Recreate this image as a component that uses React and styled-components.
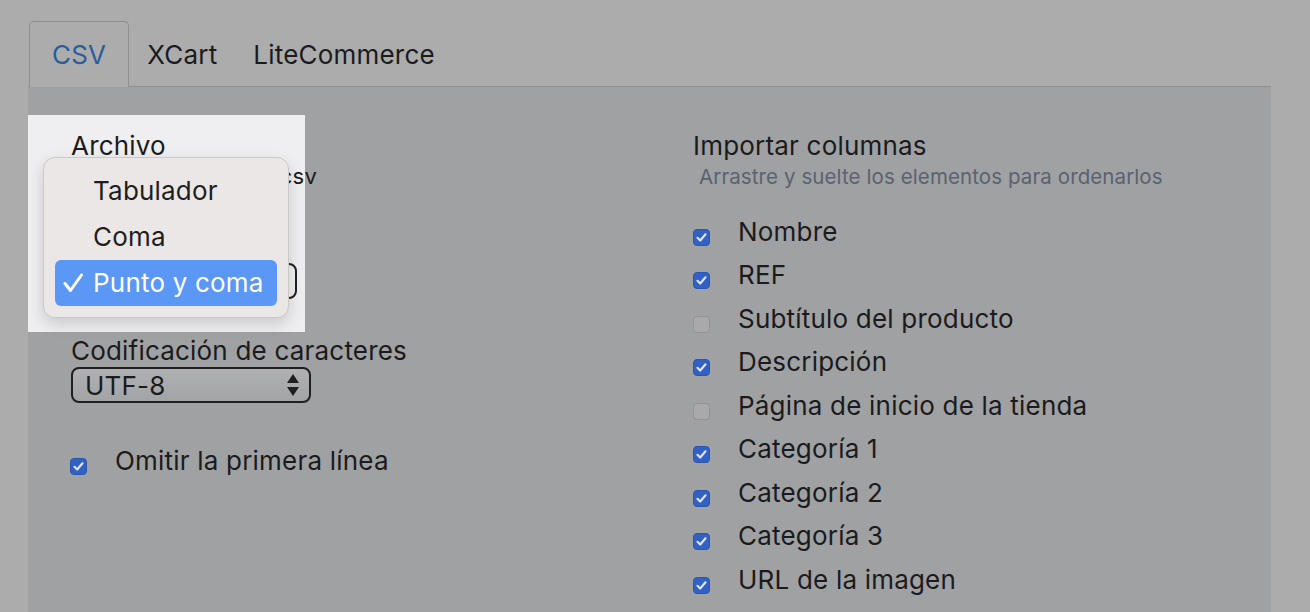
import React from 'react';
import styled, { createGlobalStyle } from 'styled-components';

const GlobalStyle = createGlobalStyle`
  html, body {
    margin: 0;
    padding: 0;
    overflow: hidden;
  }
  body {
    background: #acacac;
    font-family: Inter, "Noto Sans", sans-serif;
    color: #1b1b1d;
    letter-spacing: 0.2px;
  }
`;

const Page = styled.div`
  padding: 21px 39px 0 28px;
`;

const TabList = styled.div`
  display: flex;
  align-items: flex-start;
  height: 66px;
  box-sizing: border-box;
  border-bottom: 1px solid #8e8f91;
  padding-left: 1px;
`;

const Tab = styled.div`
  display: flex;
  align-items: center;
  box-sizing: border-box;
  height: ${p => (p.$active ? '66px' : '65px')};
  padding: 0 ${p => (p.$active ? '22px' : '17px')};
  font-size: 26px;
  color: ${p => (p.$active ? '#2b5c9e' : '#1b1b1d')};
  border: 1px solid ${p => (p.$active ? '#8e8f91' : 'transparent')};
  border-bottom: none;
  border-radius: 5px 5px 0 0;
  background: ${p => (p.$active ? '#acacac' : 'transparent')};
  position: relative;
  z-index: 1;
`;

const Panel = styled.div`
  position: relative;
  display: grid;
  grid-template-columns: 622px 1fr;
  padding: 44px 0 0 43px;
  min-height: 600px;
  background: #a0a1a3;
`;

const Spotlight = styled.div`
  position: absolute;
  left: 0;
  top: 28px;
  width: 277px;
  height: 217px;
  background: #efeff1;
`;

const Column = styled.div`
  position: relative;
  z-index: 1;
`;

const Field = styled.div`
  margin-top: ${p => p.$gap || 0}px;
`;

const Label = styled.div`
  font-size: 26px;
  line-height: 30px;
  white-space: nowrap;
`;

const FileName = styled.div`
  width: 246px;
  margin-top: 2px;
  font-size: 22px;
  line-height: 26px;
  text-align: right;
  white-space: nowrap;
`;

const Select = styled.div`
  display: flex;
  align-items: center;
  justify-content: space-between;
  box-sizing: border-box;
  width: ${p => p.$width}px;
  height: 36px;
  margin-top: 1px;
  padding: 0 10px 0 12px;
  border: 2px solid #1f1f21;
  border-radius: 8px;
  background: linear-gradient(rgba(255, 255, 255, 0.16), rgba(255, 255, 255, 0.03));
  font-size: 26px;
`;

const Subtitle = styled.div`
  margin: 4px 0 0 6px;
  font-size: 20.5px;
  line-height: 24px;
  letter-spacing: 0.1px;
  color: #5a6270;
  white-space: nowrap;
`;

const List = styled.div`
  margin-top: 27.5px;
`;

const CheckRow = styled.div`
  display: flex;
  align-items: flex-start;
  height: 43.5px;
  margin-top: ${p => p.$gap || 0}px;
  margin-left: ${p => p.$shift || 0}px;
  font-size: 26px;
  line-height: 30px;
  white-space: nowrap;
`;

const Box = styled.span`
  display: flex;
  align-items: center;
  justify-content: center;
  flex-shrink: 0;
  box-sizing: border-box;
  width: 17px;
  height: 17px;
  margin: 12px 28px 0 0;
  border-radius: 4px;
  background: ${p => (p.$checked ? '#3161c4' : '#a9a9ab')};
  border: 1px solid ${p => (p.$checked ? '#2b56b0' : '#939395')};
`;

const Menu = styled.div`
  position: absolute;
  left: 15px;
  top: 70px;
  z-index: 2;
  width: 246px;
  box-sizing: border-box;
  padding: 10px 11px 11px;
  background: #ece7e7;
  border: 1px solid #cdc8c8;
  border-radius: 12px;
  box-shadow: 0 6px 16px rgba(0, 0, 0, 0.16);
`;

const MenuItem = styled.div`
  display: flex;
  align-items: center;
  height: 46px;
  padding-left: 8px;
  border-radius: 6px;
  font-size: 26px;
  line-height: 30px;
  white-space: nowrap;
  background: ${p => (p.$selected ? '#5b97f5' : 'transparent')};
  color: ${p => (p.$selected ? '#ffffff' : '#1e1e1e')};
`;

const CheckSlot = styled.span`
  display: flex;
  align-items: center;
  width: 30px;
  flex-shrink: 0;
`;

const Tick = () => (
  <svg width="13" height="13" viewBox="0 0 13 13">
    <path d="M2.5 6.8 L5.2 9.5 L10.5 3.3" fill="none" stroke="#dfe4ee" strokeWidth="2.2" strokeLinecap="round" strokeLinejoin="round" />
  </svg>
);

const Checkbox = ({ checked }) => <Box $checked={checked}>{checked && <Tick />}</Box>;

const Arrows = () => (
  <svg width="12" height="23" viewBox="0 0 12 23">
    <path d="M0 9 L6 0 L12 9 Z" fill="#1f1f21" />
    <path d="M0 13 L12 13 L6 22 Z" fill="#1f1f21" />
  </svg>
);

const columns = [
  ['Nombre', true],
  ['REF', true],
  ['Subtítulo del producto', false],
  ['Descripción', true],
  ['Página de inicio de la tienda', false],
  ['Categoría 1', true],
  ['Categoría 2', true],
  ['Categoría 3', true],
  ['URL de la imagen', true],
];

const separators = ['Tabulador', 'Coma', 'Punto y coma'];

export default function App() {
  return (
    <>
      <GlobalStyle />
      <Page>
        <TabList>
          <Tab $active>CSV</Tab>
          <Tab>XCart</Tab>
          <Tab>LiteCommerce</Tab>
        </TabList>
        <Panel>
          <Spotlight />
          <Column>
            <Field>
              <Label>Archivo</Label>
              <FileName>productos.csv</FileName>
            </Field>
            <Field $gap={43}>
              <Label>Separador</Label>
              <Select $width={226}>
                <span>Punto y coma</span>
                <Arrows />
              </Select>
            </Field>
            <Field $gap={37}>
              <Label>Codificación de caracteres</Label>
              <Select $width={240}>
                <span>UTF-8</span>
                <Arrows />
              </Select>
            </Field>
            <CheckRow $gap={42.5} $shift={-1}>
              <Checkbox checked />
              <span>Omitir la primera línea</span>
            </CheckRow>
          </Column>
          <Column>
            <Label>Importar columnas</Label>
            <Subtitle>Arrastre y suelte los elementos para ordenarlos</Subtitle>
            <List>
              {columns.map(([name, checked]) => (
                <CheckRow key={name}>
                  <Checkbox checked={checked} />
                  <span>{name}</span>
                </CheckRow>
              ))}
            </List>
          </Column>
          <Menu>
            {separators.map(s => (
              <MenuItem key={s} $selected={s === 'Punto y coma'}>
                <CheckSlot>
                  {s === 'Punto y coma' && (
                    <svg width="20" height="20" viewBox="0 0 20 20">
                      <path d="M2 10.5 L7.5 17.5 L18.5 2" fill="none" stroke="#ffffff" strokeWidth="3" strokeLinecap="round" strokeLinejoin="round" />
                    </svg>
                  )}
                </CheckSlot>
                {s}
              </MenuItem>
            ))}
          </Menu>
        </Panel>
      </Page>
    </>
  );
}
